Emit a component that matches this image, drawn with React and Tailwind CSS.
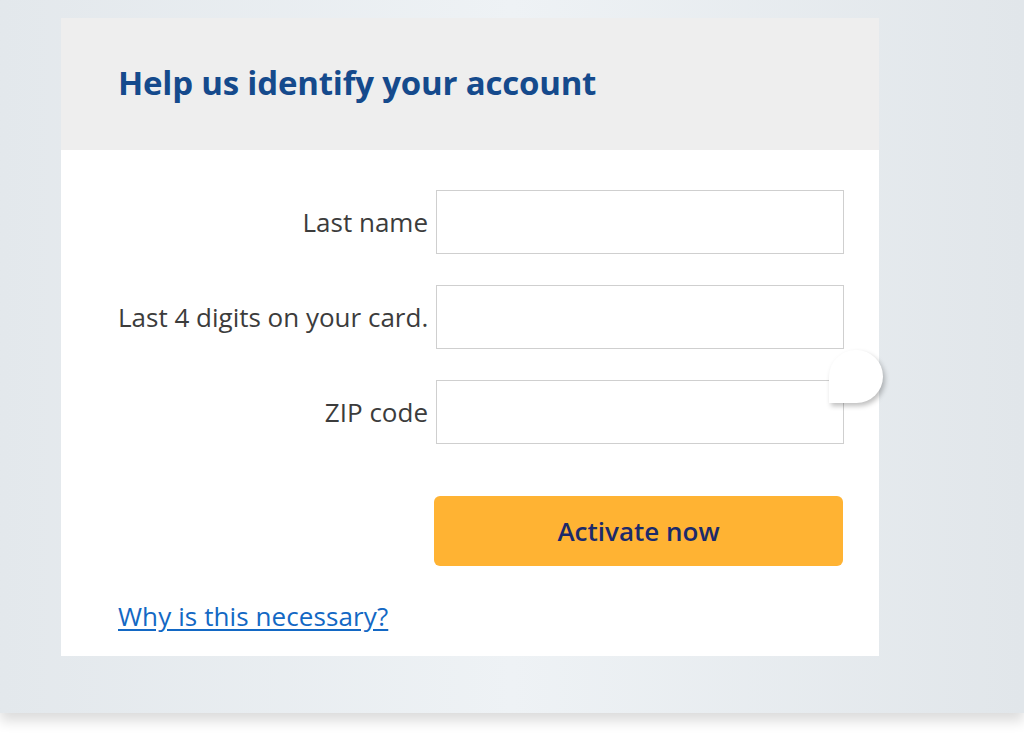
import React from 'react';

const fields = [
    { id: 'lastName', label: 'Last name' },
    { id: 'last4', label: 'Last 4 digits on your card.' },
    { id: 'zip', label: 'ZIP code' },
];

export default function App() {
    return (
        <div className="min-h-[743px] bg-white font-['Open_Sans',sans-serif]">
            <div className="relative h-[713px] bg-gradient-to-r from-[#e3e8ec] via-[#eef2f5] to-[#e1e6ea] pt-[18px] pl-[61px] shadow-[0_8px_12px_rgba(0,0,0,0.14)]">
                <div className="relative w-[818px]">
                    <div className="flex h-[132px] items-center bg-[#eeeeee] pb-[4px] pl-[57px]">
                        <h1 className="text-[33px] font-bold leading-none tracking-[-0.2px] text-[#154a8c]">
                            Help us identify your account
                        </h1>
                    </div>
                    <div className="bg-white pt-[40px] pr-[35px] pb-[20px] pl-[57px]">
                        <div className="flex flex-col gap-[31px]">
                            {fields.map(({ id, label }) => (
                                <div key={id} className="flex items-center gap-[8px]">
                                    <label htmlFor={id} className="w-[310px] whitespace-nowrap text-right text-[26px] text-[#3c3c3c]">
                                        {label}
                                    </label>
                                    <input
                                        id={id}
                                        type="text"
                                        className="h-[64px] w-[408px] border-[1.5px] border-[#cfcfcf] bg-white px-3 outline-none"
                                    />
                                </div>
                            ))}
                        </div>
                        <button className="mt-[52px] ml-[316px] flex h-[70px] w-[409px] items-center justify-center rounded-[6px] bg-[#ffb333] text-[26px] font-semibold text-[#1c2a6a]">
                            Activate now
                        </button>
                        <a href="#" className="mt-[31px] inline-block text-[26px] tracking-[0.1px] text-[#1368c4] underline underline-offset-[3px]">
                            Why is this necessary?
                        </a>
                    </div>
                    <div className="absolute left-[768px] top-[332px] h-[53px] w-[54px] rounded-full rounded-bl-none bg-white shadow-[2px_3px_5px_rgba(0,0,0,0.25)]" />
                </div>
            </div>
        </div>
    );
}
